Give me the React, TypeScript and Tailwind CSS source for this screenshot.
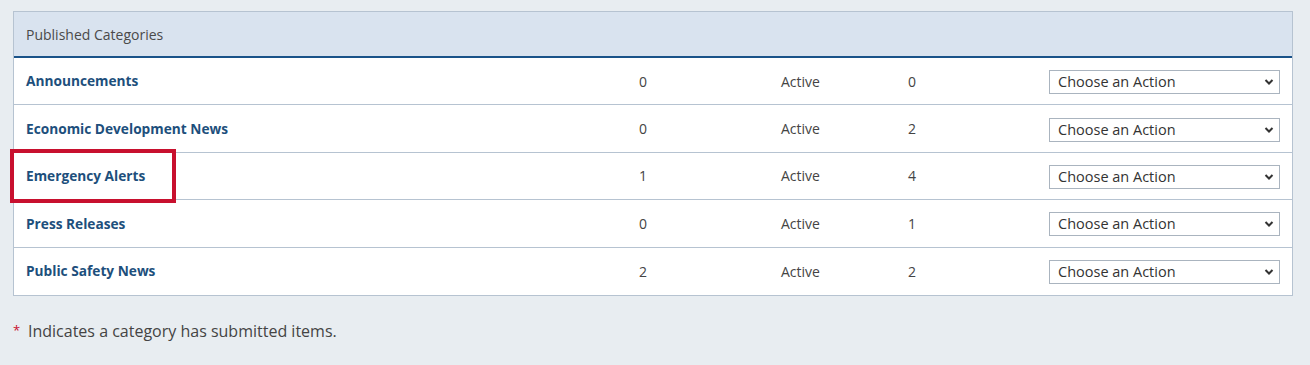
import * as React from "react";

interface Category {
  name: string;
  count: number;
  status: string;
  items: number;
  highlighted?: boolean;
}

const categories: Category[] = [
  { name: "Announcements", count: 0, status: "Active", items: 0 },
  { name: "Economic Development News", count: 0, status: "Active", items: 2 },
  { name: "Emergency Alerts", count: 1, status: "Active", items: 4, highlighted: true },
  { name: "Press Releases", count: 0, status: "Active", items: 1 },
  { name: "Public Safety News", count: 2, status: "Active", items: 2 },
];

const ActionSelect: React.FC = () => (
  <div className="relative h-[24px] w-[231px] border border-[#aab4bf] bg-white">
    <span className="absolute left-[8px] top-[2px] text-[14.5px] leading-[18px] text-[#333]">
      Choose an Action
    </span>
    <svg
      className="absolute right-[5px] top-[7px]"
      width="10"
      height="8"
      viewBox="0 0 10 8"
      fill="none"
    >
      <path d="M1.5 2 L5 5.5 L8.5 2" stroke="#333" strokeWidth="2" />
    </svg>
  </div>
);

const CategoryRow: React.FC<{ cat: Category }> = ({ cat }) => (
  <div className="grid h-[47.4px] grid-cols-[625px_142px_127px_141px_1fr] items-center border-b border-[#b6c3d1] text-[14px] text-[#444] last:border-b-0">
    <div className="relative pl-3">
      {cat.highlighted && (
        <div className="pointer-events-none absolute left-[-4px] top-[-16px] h-[54px] w-[166px] border-4 border-[#c8102e]" />
      )}
      <a className="text-[13.7px] font-bold text-[#1d4f7c]">{cat.name}</a>
    </div>
    <div>{cat.count}</div>
    <div>{cat.status}</div>
    <div>{cat.items}</div>
    <div className="pt-[2px]">
      <ActionSelect />
    </div>
  </div>
);

export default function App() {
  return (
    <div className="h-[365px] w-[1310px] bg-[#e8edf1] pl-[13px] pt-[11px] font-['Open_Sans',sans-serif]">
      <div className="w-[1280px] border border-[#b6c3d1] bg-white">
        <div className="flex h-[46px] items-center border-b-2 border-[#1a5389] bg-[#d9e3ef] pl-3 text-[14px] text-[#4a4a4a]">
          Published Categories
        </div>
        <div>
          {categories.map((cat) => (
            <CategoryRow key={cat.name} cat={cat} />
          ))}
        </div>
      </div>
      <div className="mt-[23px] flex items-center text-[16px] text-[#444]">
        <span className="w-[15px] text-[13px] text-[#c8102e]">*</span>
        <span>Indicates a category has submitted items.</span>
      </div>
    </div>
  );
}
